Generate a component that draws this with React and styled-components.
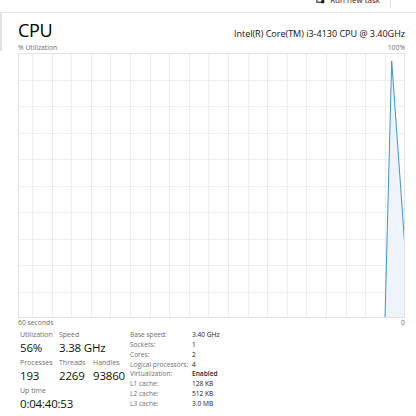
import React from "react";
import styled, { createGlobalStyle } from "styled-components";

const GlobalStyle = createGlobalStyle`
  html, body {
    margin: 0;
    padding: 0;
    background: #fff;
  }
  body {
    font-family: "Open Sans", "Noto Sans", "Liberation Sans", sans-serif;
    color: #000;
  }
`;

const Window = styled.div`
  width: 416px;
  height: 416px;
  overflow: hidden;
  display: flex;
  flex-direction: column;
  position: relative;
`;

const TopBar = styled.div`
  height: 12px;
  flex: none;
  border-bottom: 1px solid #e6e6e6;
  display: flex;
  justify-content: flex-end;
  align-items: flex-start;
  padding-right: 25px;
  overflow: hidden;
`;

const RunTask = styled.div`
  display: flex;
  align-items: center;
  gap: 5px;
  margin-top: -9px;
  font-size: 8px;
  color: #222;
  padding-right: 10px;
  border-right: 1px solid #e0e0e0;
  height: 17px;
`;

const SideMark = styled.div`
  position: absolute;
  left: 0;
  top: 13px;
  width: 2px;
  height: 38px;
  background: #e4e4e4;
`;

const Pane = styled.div`
  flex: 1;
  padding: 0 11px 0 18px;
  display: flex;
  flex-direction: column;
`;

const Header = styled.div`
  display: flex;
  justify-content: space-between;
  align-items: baseline;
  height: 28px;
  margin-top: 3px;
`;

const Title = styled.h1`
  margin: 0;
  font-weight: 400;
  font-size: 18px;
  line-height: 28px;
  letter-spacing: -0.3px;
`;

const Model = styled.div`
  font-size: 9px;
  color: #111;
`;

const AxisRow = styled.div`
  display: flex;
  justify-content: space-between;
  font-size: 6.8px;
  color: #6f6f6f;
  line-height: 8px;
  height: 8px;
  margin-top: ${({ $top }) => $top || 0}px;
`;

const GraphBox = styled.div`
  height: 265px;
  flex: none;
  margin-top: ${({ $top }) => $top || 0}px;
`;

const Stats = styled.div`
  display: flex;
  margin-top: 3px;
  padding-left: 2px;
`;

const LeftStats = styled.div`
  display: grid;
  grid-template-columns: 39px 34px auto;
  grid-auto-rows: 28px;
  width: 110px;
`;

const Stat = styled.div`
  display: flex;
  flex-direction: column;
  grid-column: ${({ $span }) => ($span ? `span ${$span}` : "auto")};
`;

const StatLabel = styled.div`
  font-size: 7px;
  line-height: 10px;
  color: #707070;
`;

const StatValue = styled.div`
  font-size: 11.5px;
  line-height: 16px;
  color: #111;
  white-space: nowrap;
  letter-spacing: -0.2px;
`;

const InfoTable = styled.div`
  display: grid;
  grid-template-columns: 62px auto;
  grid-auto-rows: 9.86px;
  font-size: 6.6px;
  line-height: 9.86px;
  margin-top: 0;
`;

const InfoKey = styled.div`
  color: #707070;
  white-space: nowrap;
`;

const InfoVal = styled.div`
  color: #222;
  font-weight: ${({ $bold }) => ($bold ? 600 : 400)};
  white-space: nowrap;
`;

const W = 387;
const H = 265;

function Graph() {
  const vLines = [];
  for (let x = 14; x < W; x += 19.6) vLines.push(x);
  const hLines = [];
  for (let i = 1; i < 10; i++) hLines.push((H / 10) * i);
  const line = [
    [367, H],
    [373.7, 8],
    [W, 195.7],
  ];
  const fill = [...line, [W, H]];
  return (
    <svg width={W} height={H} viewBox={`0 0 ${W} ${H}`} style={{ display: "block" }}>
      {vLines.map((x) => (
        <line key={`v${x}`} x1={Math.round(x) + 0.5} y1={0} x2={Math.round(x) + 0.5} y2={H} stroke="#eeeeee" strokeWidth="1" />
      ))}
      {hLines.map((y) => (
        <line key={`h${y}`} x1={0} y1={Math.round(y) + 0.5} x2={W} y2={Math.round(y) + 0.5} stroke="#eeeeee" strokeWidth="1" />
      ))}
      <polygon points={fill.map((p) => p.join(",")).join(" ")} fill="#eef4fa" />
      <polyline points={line.map((p) => p.join(",")).join(" ")} fill="none" stroke="#3c95d1" strokeWidth="1" />
      <rect x={0.5} y={0.5} width={W - 1} height={H - 1} fill="none" stroke="#e2e2e2" strokeWidth="1" />
    </svg>
  );
}

const info = [
  ["Base speed:", "3.40 GHz"],
  ["Sockets:", "1"],
  ["Cores:", "2"],
  ["Logical processors:", "4"],
  ["Virtualization:", "Enabled", true],
  ["L1 cache:", "128 KB"],
  ["L2 cache:", "512 KB"],
  ["L3 cache:", "3.0 MB"],
];

export default function App() {
  return (
    <Window>
      <GlobalStyle />
      <SideMark />
      <TopBar>
        <RunTask>
          <svg width="9" height="9" viewBox="0 0 10 10">
            <rect x="1" y="1" width="7" height="7" fill="none" stroke="#222" strokeWidth="1.2" />
            <circle cx="7.5" cy="7.5" r="2" fill="#222" />
          </svg>
          Run new task
        </RunTask>
      </TopBar>
      <Pane>
        <Header>
          <Title>CPU</Title>
          <Model>Intel(R) Core(TM) i3-4130 CPU @ 3.40GHz</Model>
        </Header>
        <AxisRow>
          <span>% Utilization</span>
          <span>100%</span>
        </AxisRow>
        <GraphBox $top={1}>
          <Graph />
        </GraphBox>
        <AxisRow $top={1}>
          <span>60 seconds</span>
          <span>0</span>
        </AxisRow>
        <Stats>
          <LeftStats>
            <Stat>
              <StatLabel>Utilization</StatLabel>
              <StatValue>56%</StatValue>
            </Stat>
            <Stat $span={2}>
              <StatLabel>Speed</StatLabel>
              <StatValue>3.38 GHz</StatValue>
            </Stat>
            <Stat>
              <StatLabel>Processes</StatLabel>
              <StatValue>193</StatValue>
            </Stat>
            <Stat>
              <StatLabel>Threads</StatLabel>
              <StatValue>2269</StatValue>
            </Stat>
            <Stat>
              <StatLabel>Handles</StatLabel>
              <StatValue>93860</StatValue>
            </Stat>
            <Stat $span={3}>
              <StatLabel>Up time</StatLabel>
              <StatValue>0:04:40:53</StatValue>
            </Stat>
          </LeftStats>
          <InfoTable>
            {info.map(([k, v, b]) => (
              <React.Fragment key={k}>
                <InfoKey>{k}</InfoKey>
                <InfoVal $bold={b}>{v}</InfoVal>
              </React.Fragment>
            ))}
          </InfoTable>
        </Stats>
      </Pane>
    </Window>
  );
}
